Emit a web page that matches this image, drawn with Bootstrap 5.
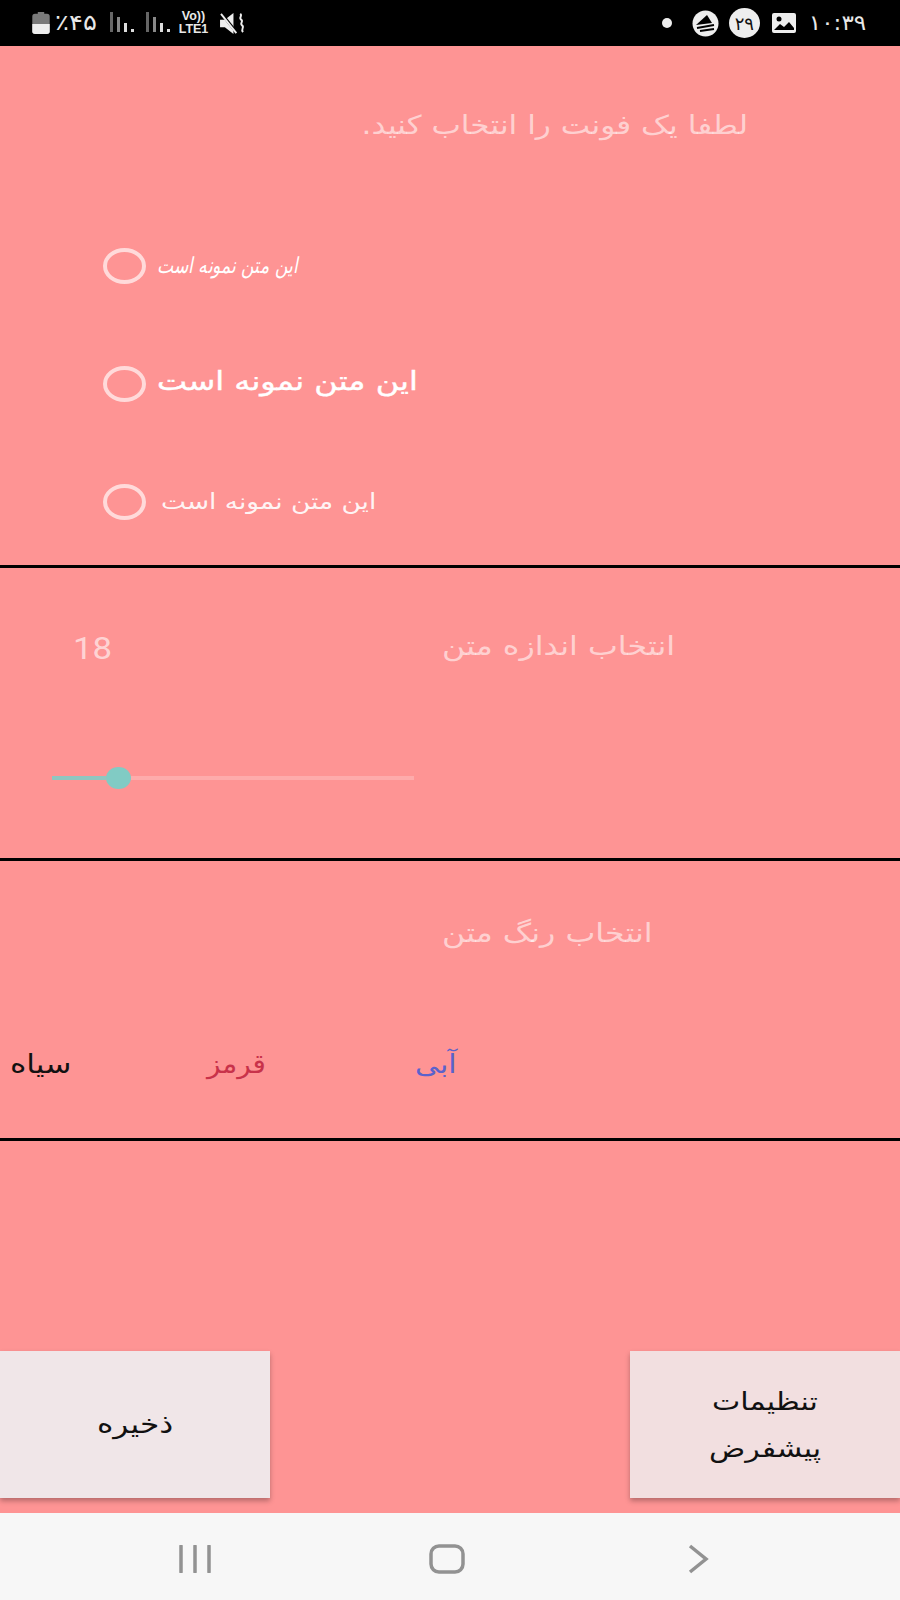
<!doctype html>
<html lang="fa">
<head>
<meta charset="utf-8">
<title>تنظیمات</title>
<link href="https://cdn.jsdelivr.net/npm/bootstrap@5.3.0/dist/css/bootstrap.min.css" rel="stylesheet">
<style>
html,body{width:900px;height:1600px;margin:0;overflow:hidden;background:#fe9494;font-family:"DejaVu Sans",sans-serif}
.screen{width:900px;height:1600px}
.statusbar{height:46px;background:#000;color:#e8e8e8;font-size:20px;flex:none}
.stat-l{padding-left:32px}
.stat-r{padding-right:34px}
.pct{font-size:22px;margin-left:5px;width:55px;line-height:1;text-align:left;transform:scaleX(1.18);transform-origin:left center}
.sig2{margin-left:12px}
.lte{font-size:12.5px;line-height:13px;font-weight:700;font-family:"Liberation Sans",sans-serif;text-align:center;margin-left:7px;width:33px}
.spk{margin-left:10px}
.logo-ic{margin-left:20px}
.clock{font-size:21px;margin-left:18px;line-height:1;transform:scaleX(1.1);transform-origin:right center}
.badge-day{width:31px;height:30px;border-radius:50%;background:#eee;color:#111;font-size:18px;margin:0 12px 0 10px}
.sect{border-bottom:3px solid #000;flex:none}
.sect-font{height:522px}
.sect-size{height:293px}
.sect-color{height:280px}
.heading{color:rgba(255,255,255,.58);font-size:26px;line-height:30px;white-space:nowrap;direction:rtl;display:inline-block;transform:scaleX(1.22);transform-origin:left center}
.head-font{padding:64px 152px 0 0;text-align:right}
.head-font .heading{transform:scaleX(1.2);transform-origin:right center}
.radio-list{padding:107px 0 0 103px;gap:82px}
.radio-row{height:36px;gap:11px;margin:0}
.radio-row .form-check-input{width:43px;height:36px;margin:0;flex:none;float:none;background:transparent;border:4px solid rgba(255,255,255,.65);border-radius:50%}
.sample{color:#fff;line-height:36px;white-space:nowrap;direction:rtl;display:inline-block;transform-origin:left center}
.s-italic{font-family:"DejaVu Serif","DejaVu Sans",serif;font-style:italic;font-size:22px;transform:scaleX(.78);letter-spacing:-.5px}
.s-bold{font-size:26px;line-height:30px;margin-bottom:6px;transform:scaleX(1.23);-webkit-text-stroke:.4px #fff}
.s-plain{font-size:22px;margin-left:4px;transform:scaleX(1.2);color:rgba(255,255,255,.92)}
.size-top{padding:63px 0 0 73px}
.size-num{font-family:Roboto,sans-serif;color:rgba(255,255,255,.62);font-size:31px;line-height:36px;width:369px;transform:scaleX(1.12);transform-origin:left center}
.track{margin:100px 0 0 52px;width:362px}
.t-on{height:4px;width:54px;background:#8fc6c0;flex:none}
.t-thumb{width:25px;height:22px;border-radius:50%;background:#81cbc4;flex:none}
.t-off{height:4px;flex:1;background:rgba(255,255,255,.22)}
.head-col{padding:57px 0 0 442px}
.colors{padding-top:97px;height:60px}
.c-opt{font-size:26px;line-height:36px;direction:rtl;text-align:left;transform-origin:left center}
.c-opt span{display:inline-block}
.c-black{color:#111;margin-left:10px;width:197px;transform:scaleX(1.2)}
.c-red{color:#c8324a;width:208px;transform:scaleX(1.07)}
.c-blue{color:#5a62cc;transform:scaleX(1.15)}
.btns{flex:1;align-items:flex-end;padding-bottom:15px}
.act{width:270px;height:147px;border:0;border-radius:0;color:#111;box-shadow:0 3px 5px rgba(0,0,0,.28);padding:0}
.act-l{background:#f0e6e8}
.act-r{background:#f2dfe0}
.act-label{display:inline-block;font-size:26px;line-height:47px;width:112px;transform:scaleX(1.2)}
.act-r .act-label{font-size:25px;padding-bottom:0}
.navbar-sys{height:87px;background:#f7f7f7;flex:none;padding:4px 0 0}
.navbar-sys svg{display:block}
.n1{margin-left:179px}
.n2{margin-left:218px}
.n3{margin-left:222px}
</style>
</head>
<body>
<div class="screen d-flex flex-column">
  <div class="statusbar d-flex align-items-center justify-content-between">
    <div class="d-flex align-items-center stat-l">
      <svg width="18" height="22" viewBox="0 0 19 24"><path d="M6 0h7v2h3a3 3 0 0 1 3 3v16a3 3 0 0 1-3 3H3a3 3 0 0 1-3-3V5a3 3 0 0 1 3-3h3z" fill="#7a7a7a"/><path d="M0 13h19v8a3 3 0 0 1-3 3H3a3 3 0 0 1-3-3z" fill="#eee"/></svg>
      <span class="pct" dir="rtl">٪۴۵</span>
      <svg width="24" height="22" viewBox="0 0 24 22"><rect x="0" y="0" width="3" height="20" fill="#666"/><rect x="7" y="5" width="3" height="15" fill="#888"/><rect x="14" y="11" width="3" height="9" fill="#ddd"/><rect x="21" y="17" width="3" height="3" fill="#ddd"/></svg>
      <svg width="24" height="22" viewBox="0 0 24 22" class="sig2"><rect x="0" y="0" width="3" height="20" fill="#666"/><rect x="7" y="5" width="3" height="15" fill="#888"/><rect x="14" y="11" width="3" height="9" fill="#ddd"/><rect x="21" y="17" width="3" height="3" fill="#ddd"/></svg>
      <div class="lte">Vo))<br>LTE1</div>
      <svg width="25" height="23" viewBox="0 0 26 24" class="spk"><path d="M0 8h5l9-7v22l-9-7H0z" fill="#eee"/><path d="M1 1l16 20" stroke="#000" stroke-width="3"/><path d="M1 2l16 20" stroke="#eee" stroke-width="2"/><path d="M21 2c3 2-2 4 1 6s-2 4 1 6-2 4 1 7" fill="none" stroke="#eee" stroke-width="2"/></svg>
    </div>
    <div class="d-flex align-items-center stat-r">
      <svg width="10" height="10" viewBox="0 0 10 10"><circle cx="5" cy="5" r="5" fill="#eee"/></svg>
      <svg width="27" height="27" viewBox="0 0 27 27" class="logo-ic"><circle cx="13.5" cy="13.5" r="13" fill="#eee"/><path d="M4 15L15 5l5 8z" fill="#000"/><path d="M5 18l17-3M8 21l14-2" fill="none" stroke="#000" stroke-width="2"/></svg>
      <div class="badge-day d-flex align-items-center justify-content-center" dir="rtl">۲۹</div>
      <svg width="24" height="20" viewBox="0 0 24 20"><rect width="24" height="20" rx="2" fill="#eee"/><circle cx="7" cy="6" r="2.5" fill="#000"/><path d="M2 17l6-6 4 3 5-5 5 6v2H2z" fill="#000"/></svg>
      <span class="clock" dir="rtl">۱۰:۳۹</span>
    </div>
  </div>

  <section class="sect sect-font">
    <div class="head-font"><div class="heading">لطفا یک فونت را انتخاب کنید.</div></div>
    <div class="radio-list d-flex flex-column">
      <div class="radio-row d-flex align-items-center form-check p-0"><input class="form-check-input" type="radio" name="f"><label class="sample s-italic">این متن نمونه است</label></div>
      <div class="radio-row d-flex align-items-center form-check p-0"><input class="form-check-input" type="radio" name="f"><label class="sample s-bold">این متن نمونه است</label></div>
      <div class="radio-row d-flex align-items-center form-check p-0"><input class="form-check-input" type="radio" name="f"><label class="sample s-plain">این متن نمونه است</label></div>
    </div>
  </section>

  <section class="sect sect-size">
    <div class="d-flex size-top">
      <div class="size-num">18</div>
      <div class="heading">انتخاب اندازه متن</div>
    </div>
    <div class="track d-flex align-items-center">
      <div class="t-on"></div><div class="t-thumb"></div><div class="t-off"></div>
    </div>
  </section>

  <section class="sect sect-color">
    <div class="head-col"><div class="heading">انتخاب رنگ متن</div></div>
    <div class="colors d-flex">
      <div class="c-opt c-black"><span>سیاه</span></div>
      <div class="c-opt c-red"><span>قرمز</span></div>
      <div class="c-opt c-blue"><span>آبی</span></div>
    </div>
  </section>

  <div class="btns d-flex justify-content-between">
    <button type="button" class="btn act act-l"><span class="act-label">ذخیره</span></button>
    <button type="button" class="btn act act-r"><span class="act-label">تنظیمات پیشفرض</span></button>
  </div>

  <div class="navbar-sys d-flex align-items-center">
    <svg class="n1" width="32" height="28" viewBox="0 0 32 28"><path d="M2 1v26M16 1v26M30 1v26" stroke="#929292" stroke-width="3.5" stroke-linecap="round"/></svg>
    <svg class="n2" width="36" height="30" viewBox="0 0 36 30"><rect x="2" y="2" width="32" height="26" rx="8" fill="none" stroke="#929292" stroke-width="3.5"/></svg>
    <svg class="n3" width="22" height="30" viewBox="0 0 22 30"><path d="M3 2l16 13L3 28" fill="none" stroke="#929292" stroke-width="3.5"/></svg>
  </div>
</div>
</body>
</html>
